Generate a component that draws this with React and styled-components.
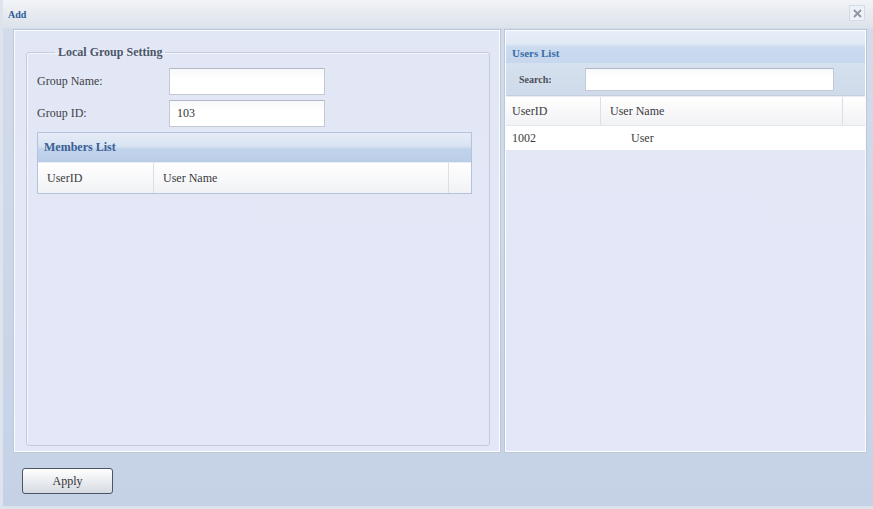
import React from "react";
import styled, { createGlobalStyle } from "styled-components";

const GlobalStyle = createGlobalStyle`
  html, body {
    margin: 0;
    padding: 0;
    background: #c9d5e7;
  }
  body {
    font-family: "Liberation Serif", "Times New Roman", serif;
    color: #333;
  }
`;

const Window = styled.div`
  width: 873px;
  height: 509px;
  display: flex;
  flex-direction: column;
  background: linear-gradient(#d3dcea, #c5d2e6);
  box-sizing: border-box;
  border-left: 3px solid #dfe4ec;
  border-bottom: 3px solid #dde3ec;
`;

const TitleBar = styled.div`
  height: 28px;
  flex: none;
  display: flex;
  align-items: center;
  justify-content: space-between;
  padding: 0 8px 0 5px;
  background: linear-gradient(#f1f3f6, #dde3eb);
`;

const Title = styled.span`
  font-size: 10px;
  font-weight: bold;
  color: #2d5b9b;
`;

const Close = styled.span`
  width: 14px;
  height: 14px;
  display: flex;
  align-items: center;
  justify-content: center;
  background: #eef1f5;
  border: 1px solid #d5dbe4;
  margin-bottom: 2px;
`;

const Body = styled.div`
  flex: 1;
  display: flex;
  gap: 5px;
  padding: 2px 5px 0 11px;
`;

const Panel = styled.div`
  width: ${(p) => p.$w}px;
  height: 422px;
  box-sizing: border-box;
  border: 1px solid #fafcff;
  box-shadow: 0 0 0 1px #bcc8da;
  background: linear-gradient(#e2e7f6, #e4e7f7);
  display: flex;
  flex-direction: column;
`;

const Fieldset = styled.fieldset`
  margin: 14px 9px 5px 11px;
  padding: 8px 17px 0 10px;
  flex: 1;
  border: 1px solid #c3ccdc;
  border-radius: 3px;
  box-shadow: inset 1px 1px 0 #f4f6fb;
  min-width: 0;
`;

const Legend = styled.legend`
  padding: 0 3px;
  margin-left: 18px;
  font-size: 12px;
  font-weight: bold;
  color: #4d5668;
`;

const FormRow = styled.div`
  display: flex;
  align-items: center;
  height: 27px;
  margin-bottom: 5px;
`;

const Label = styled.label`
  width: 132px;
  font-size: 12px;
  color: #3d3f44;
`;

const Input = styled.div`
  width: ${(p) => p.$w || 156}px;
  height: ${(p) => p.$h || 27}px;
  box-sizing: border-box;
  border: 1px solid #c4c9d2;
  border-top-color: #b3b9c3;
  background: linear-gradient(#f7f8fa, #ffffff 40%);
  font-size: 12px;
  display: flex;
  align-items: center;
  padding-left: 7px;
`;

const Grid = styled.div`
  border: 1px solid #b3c3d9;
`;

const GridHead = styled.div`
  height: 29px;
  display: flex;
  align-items: center;
  padding-left: 6px;
  background: linear-gradient(#e6ecf7 0%, #d8e3f2 45%, #c2d4ec 55%, #bacde8 100%);
  font-size: 12px;
  font-weight: bold;
  color: #3a5f96;
`;

const Columns = styled.div`
  display: flex;
  height: ${(p) => p.$h || 30}px;
  background: linear-gradient(#ffffff, #f1f2f5);
  border-top: 1px solid #e8ecf2;
`;

const Col = styled.div`
  width: ${(p) => p.$w}px;
  ${(p) => (p.$fill ? "flex: 1;" : "flex: none;")}
  box-sizing: border-box;
  border-right: 1px solid #dcdfe5;
  display: flex;
  align-items: center;
  padding-left: ${(p) => p.$pad ?? 9}px;
  font-size: 12px;
  color: #3a3a3a;
  &:last-child {
    border-right: none;
  }
`;

const UsersHead = styled.div`
  height: 32px;
  flex: none;
  display: flex;
  align-items: flex-end;
  padding: 0 0 4px 6px;
  box-sizing: border-box;
  background: linear-gradient(#e8eef9 0%, #e0e9f6 40%, #cbdbef 50%, #c6d7ee 100%);
  font-size: 11px;
  font-weight: bold;
  color: #3a6aa6;
`;

const SearchBar = styled.div`
  height: 32px;
  flex: none;
  display: flex;
  align-items: center;
  padding-left: 13px;
  gap: 33px;
  background: linear-gradient(#d6e1ef, #cfdaea);
  border-bottom: 1px solid #c3cfde;
`;

const SearchLabel = styled.span`
  font-size: 10px;
  font-weight: bold;
  color: #4a4f58;
`;

const Row = styled.div`
  display: flex;
  height: 24px;
  background: #ffffff;
  border-top: 1px solid #e4e8ee;
`;

const Cell = styled.div`
  width: ${(p) => p.$w}px;
  padding-left: ${(p) => p.$pad}px;
  box-sizing: border-box;
  display: flex;
  align-items: center;
  font-size: 12px;
  color: #3a3a3a;
`;

const Footer = styled.div`
  height: 50px;
  flex: none;
  display: flex;
  align-items: center;
  padding-left: 19px;
`;

const Button = styled.button`
  width: 91px;
  height: 26px;
  border: 1px solid #4b5565;
  border-radius: 3px;
  background: linear-gradient(#ffffff, #e6e9ee 60%, #d6dbe2);
  font-family: inherit;
  font-size: 12px;
  color: #333;
  cursor: pointer;
`;

export default function App() {
  return (
    <>
      <GlobalStyle />
      <Window>
        <TitleBar>
          <Title>Add</Title>
          <Close>
            <svg width="9" height="9" viewBox="0 0 9 9">
              <path d="M1 1L8 8M8 1L1 8" stroke="#8d96a4" strokeWidth="1.8" />
            </svg>
          </Close>
        </TitleBar>
        <Body>
          <Panel $w={486}>
            <Fieldset>
              <Legend>Local Group Setting</Legend>
              <FormRow>
                <Label>Group Name:</Label>
                <Input />
              </FormRow>
              <FormRow>
                <Label>Group ID:</Label>
                <Input>103</Input>
              </FormRow>
              <Grid>
                <GridHead>Members List</GridHead>
                <Columns>
                  <Col $w={116}>UserID</Col>
                  <Col $fill>User Name</Col>
                  <Col $w={22} />
                </Columns>
              </Grid>
            </Fieldset>
          </Panel>
          <Panel $w={361}>
            <UsersHead>Users List</UsersHead>
            <SearchBar>
              <SearchLabel>Search:</SearchLabel>
              <Input $w={249} $h={23} />
            </SearchBar>
            <Columns $h={28}>
              <Col $w={95} $pad={6}>UserID</Col>
              <Col $fill>User Name</Col>
              <Col $w={22} />
            </Columns>
            <Row>
              <Cell $w={95} $pad={6}>1002</Cell>
              <Cell $w={200} $pad={30}>User</Cell>
            </Row>
          </Panel>
        </Body>
        <Footer>
          <Button>Apply</Button>
        </Footer>
      </Window>
    </>
  );
}
